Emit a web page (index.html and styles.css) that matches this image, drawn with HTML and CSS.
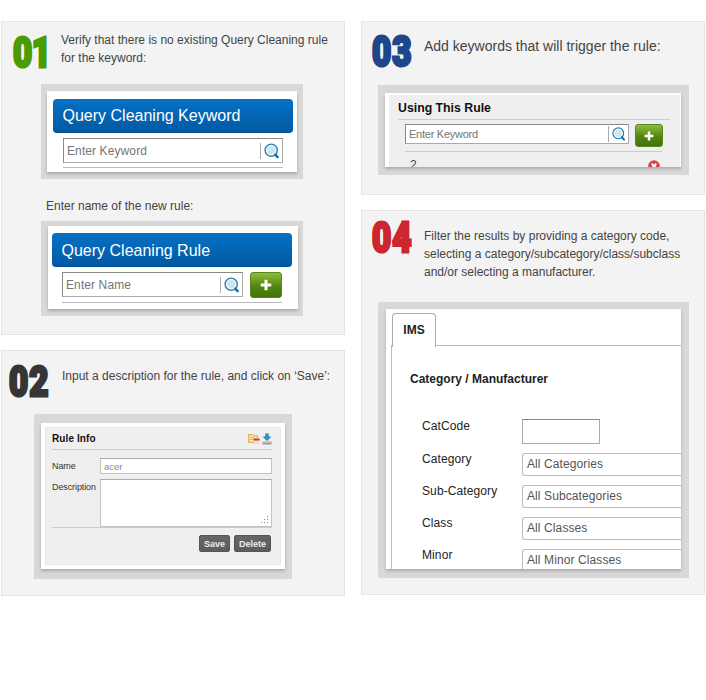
FILE: index.html
```html
<!DOCTYPE html>
<html lang="en">
<head>
<meta charset="utf-8">
<title>Query Cleaning</title>
<link rel="stylesheet" href="styles.css">
</head>
<body>
<svg class="defs" width="0" height="0" aria-hidden="true">
  <symbol id="lens" viewBox="0 0 16 16">
    <circle cx="7.2" cy="7.2" r="4.1" fill="#cfe5ee"/>
    <circle cx="7.2" cy="7.2" r="6.1" fill="none" stroke="#287fb5" stroke-width="1.4"/>
    <path d="M11.2 11.6l2.5 2.6" stroke="#1770aa" stroke-width="2.4" stroke-linecap="round"/>
  </symbol>
  <symbol id="plus" viewBox="0 0 12 12">
    <path d="M6 .7v10.6M.7 6h10.6" stroke="#fff" stroke-width="3"/>
  </symbol>
</svg>
<main class="board">
  <div class="column">
    <section class="card card-one">
      <header class="step"><span class="num green">01</span><p class="t-verify">Verify that there is no existing Query Cleaning rule<br>for the keyword:</p></header>
      <div class="frame f-keyword">
        <div class="paper">
          <h2 class="bar">Query Cleaning Keyword</h2>
          <div class="row"><div class="field"><span>Enter Keyword</span><i></i><svg><use href="#lens"/></svg></div></div>
          <hr>
        </div>
      </div>
      <p class="between">Enter name of the new rule:</p>
      <div class="frame f-rule">
        <div class="paper">
          <h2 class="bar">Query Cleaning Rule</h2>
          <div class="row"><div class="field"><span>Enter Name</span><i></i><svg><use href="#lens"/></svg></div><div class="add"><svg><use href="#plus"/></svg></div></div>
          <hr>
        </div>
      </div>
    </section>
    <section class="card card-two">
      <header class="step"><span class="num dark">02</span><p class="t-input">Input a description for the rule, and click on ‘Save’:</p></header>
      <div class="frame f-info">
        <div class="paper"><div class="panel">
          <div class="title"><h3>Rule Info</h3>
            <svg class="note" viewBox="0 0 12 12"><path d="M.7 1.5h4l1 1.3h4v6.5h-9z" fill="#fbe89e" stroke="#d9a548"/><path d="M2 4.5h4M2 6.5h3" stroke="#e3b650"/><path d="M6 5h5.5v6H6z" fill="#f4dcd5"/><path d="M5.5 6.5h6" stroke="#c7392b" stroke-width="2"/></svg>
            <svg class="down" viewBox="0 0 10 12"><path d="M3.2.5h3.6v3h2.7L5 8 .5 3.5h2.7z" fill="#2c8fc7"/><path d="M.5 8.5h9v3h-9z" fill="#999"/><path d="M1 9.2h8" stroke="#d5d5d5"/></svg>
          </div>
          <div class="line name"><label>Name</label><div class="box">acer</div></div>
          <div class="line desc"><label>Description</label><div class="box"><svg viewBox="0 0 8 8"><path d="M6 0h1v1H6zM3 3h1v1H3zM6 3h1v1H6zM0 6h1v1H0zM3 6h1v1H3zM6 6h1v1H6z" fill="#888"/></svg></div></div>
          <div class="actions"><b class="save">Save</b><b class="delete">Delete</b></div>
        </div></div>
      </div>
    </section>
  </div>
  <div class="column">
    <section class="card card-three">
      <header class="step"><span class="num blue">03</span><p class="t-add">Add keywords that will trigger the rule:</p></header>
      <div class="frame f-using">
        <div class="paper"><div class="panel">
          <h3>Using This Rule</h3>
          <div class="row"><div class="field"><span>Enter Keyword</span><i></i><svg><use href="#lens"/></svg></div><div class="add"><svg><use href="#plus"/></svg></div></div>
          <div class="entry"><span>2</span><svg viewBox="0 0 12 12"><circle cx="6" cy="6" r="5.8" fill="#d94345"/><path d="M3.7 3.7l4.6 4.6M8.3 3.7L3.7 8.3" stroke="#fff" stroke-width="1.9"/></svg></div>
        </div></div>
      </div>
    </section>
    <section class="card card-four">
      <header class="step"><span class="num red">04</span><p class="t-filter">Filter the results by providing a category code,<br>selecting a category/subcategory/class/subclass<br>and/or selecting a manufacturer.</p></header>
      <div class="frame f-filter">
        <div class="paper">
          <div class="tab">IMS</div>
          <div class="sheet">
            <h3>Category / Manufacturer</h3>
            <div class="pick code"><label>CatCode</label><div class="blank"></div></div>
            <div class="pick"><label>Category</label><div class="select">All Categories</div></div>
            <div class="pick"><label>Sub-Category</label><div class="select">All Subcategories</div></div>
            <div class="pick"><label>Class</label><div class="select">All Classes</div></div>
            <div class="pick"><label>Minor</label><div class="select">All Minor Classes</div></div>
          </div>
        </div>
      </div>
    </section>
  </div>
</main>
</body>
</html>
```
FILE: styles.css
```css
* { box-sizing: border-box; }
body { margin: 0; background: #fff; font-family: "Liberation Sans", Arial, sans-serif; font-size: 12px; color: #444; }
h2, h3, p, hr { margin: 0; }
svg { display: block; flex: none; }
.defs { position: absolute; }
.board { display: flex; gap: 16px; padding: 21px 0 0 1px; height: 700px; overflow: hidden; }
.column { width: 344px; flex: none; display: flex; flex-direction: column; gap: 15px; }
.card { background: #f3f3f3; border: 1px solid #e4e4e4; overflow: hidden; }
.card-one { height: 314px; }
.card-two { height: 246px; }
.card-three { height: 174px; }
.card-four { height: 385px; }

.step { display: flex; align-items: flex-start; }
.step p { line-height: 18px; white-space: nowrap; flex: none; }
.num { width: 50px; flex: none; font: 900 42px/46px Roboto, sans-serif; transform-origin: 0 0; transform: scaleX(.79); -webkit-text-stroke: 3px currentColor; letter-spacing: 1.2px; white-space: nowrap; }
.green { color: #4a9b04; letter-spacing: -.6px; }
.dark { color: #353535; }
.blue { color: #1d4789; }
.red { color: #cc2730; }

.card-one .step { height: 62px; padding: 8px 0 0 11px; }
.card-one .step p { margin: 1px 0 0 -2px; }
.card-two .step { height: 63px; padding: 8px 0 0 7px; }
.card-two .step p { margin: 8px 0 0 3px; }
.card-three .step { height: 63px; padding: 7px 0 0 10px; }
.card-three .step p { margin: 8px 0 0 2px; font-size: 14px; }
.card-four .step { height: 91px; padding: 4px 0 0 10px; }
.card-four .step p { margin: 12px 0 0 2px; }

.frame { background: #d8d8d8; }
.paper { background: #fff; height: 100%; overflow: hidden; box-shadow: 0 2px 3px rgba(0,0,0,.22); }
.f-keyword { width: 262px; height: 95px; margin-left: 39px; padding: 7px 6px; }
.f-keyword .paper { padding: 8px 4px 0 6px; }
.between { height: 42px; padding: 18px 0 0 44px; line-height: 18px; }
.f-rule { width: 262px; height: 95px; margin-left: 39px; padding: 5px 5px 7px 7px; }
.f-rule .paper { padding: 7px 6px 0 4px; }
.bar { height: 34px; padding-left: 9.5px; border-radius: 4px; background: linear-gradient(#0671c5, #0259a3); border-bottom: 1px solid #034f93; color: #fff; font-size: 16px; font-weight: 400; line-height: 34px; }
.f-rule .bar { line-height: 35px; }
.row { display: flex; }
.f-keyword .row, .f-rule .row { margin: 5px 10px 0; gap: 7px; }
.field { display: flex; align-items: center; flex: 1; height: 25px; border: 1px solid #aaa; border-top-color: #888; border-left-color: #888; background: #fff; color: #757575; font-size: 12px; letter-spacing: .1px; padding: 0 2px 0 3px; }
.field span { flex: 1; white-space: nowrap; }
.field i { width: 1px; height: 16px; background: #aaa; margin-right: 3px; }
.field svg { width: 16px; height: 16px; }
.add { display: flex; align-items: center; justify-content: center; width: 32px; height: 26px; border-radius: 3px; background: linear-gradient(#8fbb3a, #528710 55%, #427308); border: 1px solid #588622; }
.add svg { width: 12px; height: 12px; }
hr { border: 0; height: 1px; background: #bbb; margin: 4px 10px 0; }

.f-info { width: 258px; height: 165px; margin-left: 32px; padding: 9px 7px 10px; }
.f-info .paper { padding: 4px; }
.f-info .panel { height: 138px; background: #efefef; border: 1px solid #e8e8e8; padding: 0 8px 0 6px; }
.title { display: flex; height: 22px; border-bottom: 1px solid #ccc; }
.title h3 { flex: 1; font-size: 10px; letter-spacing: .1px; color: #111; line-height: 22px; }
.note { width: 12px; height: 12px; margin: 5px 2px 0 0; }
.down { width: 10px; height: 12px; margin-top: 5px; }
.line { display: flex; }
.line label { width: 48px; font-size: 9px; color: #333; line-height: 16px; letter-spacing: -.1px; }
.box { flex: 1; background: #fff; border: 1px solid #c3c3c3; border-top-color: #aaa; }
.name { height: 16px; margin-top: 8px; }
.name .box { font-size: 9.5px; line-height: 16px; color: #888; padding-left: 3px; }
.desc { height: 49px; margin-top: 5px; border-bottom: 1px solid #ccc; }
.desc .box { display: flex; justify-content: flex-end; align-items: flex-end; padding: 0 2px 2px 0; }
.desc svg { width: 8px; height: 8px; }
.actions { display: flex; justify-content: flex-end; gap: 4px; padding: 7px 1px 0 0; }
.actions b { height: 17px; border-radius: 2px; background: linear-gradient(#666, #5c5c5c); border: 1px solid #555; color: #eee; font-size: 9px; line-height: 16px; text-align: center; }
.save { width: 31px; }
.delete { width: 37px; }

.f-using { width: 311px; height: 90px; margin-left: 16px; padding: 8px 8px 8px 7px; }
.f-using .paper { padding: 2px 1px 0 4px; }
.f-using .panel { background: #efefef; height: 72px; padding: 0 10px 0 9px; overflow: hidden; }
.f-using h3 { font-size: 12.3px; line-height: 27px; height: 25px; border-bottom: 1px solid #ccc; color: #111; }
.f-using .row { margin: 4px 7px 0; gap: 6px; }
.f-using .field { height: 20px; font-size: 11px; letter-spacing: -.25px; }
.f-using .field svg { width: 14px; height: 14px; }
.f-using .add { width: 28px; height: 23px; }
.f-using .add svg { width: 10px; height: 10px; }
.entry { display: flex; justify-content: space-between; margin: 4px 8px 0 7px; padding: 7px 2px 0 5px; border-top: 1px solid #ccc; font-size: 12px; line-height: 13px; }
.entry svg { width: 12px; height: 12px; margin-top: 1px; }

.f-filter { width: 311px; height: 276px; margin-left: 16px; padding: 7px 8px 9px; }
.f-filter .paper { padding: 4px 0 0 5px; color: #222; }
.tab { position: relative; width: 44px; height: 34px; margin-left: 1px; border: 1px solid #aaa; border-bottom: 0; border-radius: 4px 4px 0 0; background: #fff; font-weight: bold; line-height: 33px; text-align: center; }
.sheet { height: 226px; margin-top: -2px; border-top: 1px solid #bbb; border-left: 1px solid #bbb; padding: 24px 0 0 18px; }
.sheet h3 { font-size: 12px; line-height: 18px; }
.pick { display: flex; height: 32px; padding-left: 12px; }
.pick label { width: 100px; flex: none; line-height: 12px; letter-spacing: .1px; }
.pick.code { height: 34px; margin-top: 31px; }
.pick.code label { line-height: 14px; }
.blank { width: 78px; height: 25px; border: 1px solid #aaa; border-top-color: #888; }
.select { flex: 1; height: 23px; border: 1px solid #bbb; border-right: 0; border-radius: 3px 0 0 3px; padding-left: 4px; line-height: 21px; letter-spacing: .1px; color: #555; }
```
